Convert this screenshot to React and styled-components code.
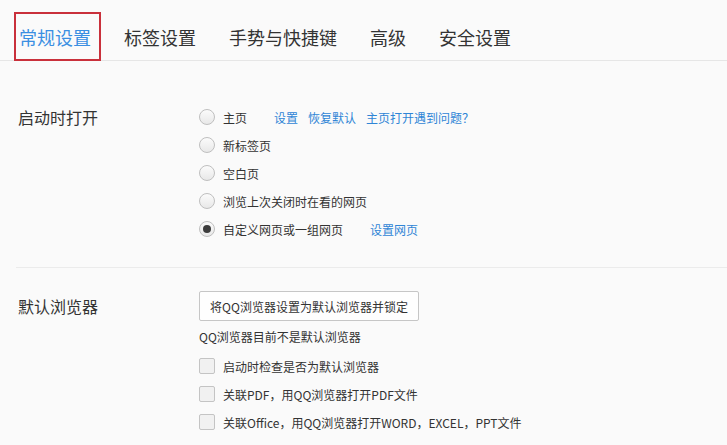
import React from "react";
import styled, { createGlobalStyle } from "styled-components";

const Global = createGlobalStyle`
  html, body { margin: 0; padding: 0; background: #fafafa; }
  body {
    font-family: "Noto Sans CJK SC", "Noto Sans", "Liberation Sans", sans-serif;
    color: #333;
  }
  * { box-sizing: border-box; }
`;

const Page = styled.div`
  width: 727px;
  height: 445px;
  overflow: hidden;
  background: #fafafa;
`;

const TabBar = styled.div`
  position: relative;
  display: flex;
  gap: 33px;
  height: 61px;
  padding: 24px 0 0 19px;
  border-bottom: 1px solid #e6e6e6;
`;

const Tab = styled.div`
  font-size: 18px;
  line-height: 26px;
  color: ${(p) => (p.$active ? "#3a8fe2" : "#333")};
  white-space: nowrap;
`;

const Highlight = styled.div`
  position: absolute;
  left: 14px;
  top: 12px;
  width: 87px;
  height: 49px;
  border: 2px solid #c9303b;
  pointer-events: none;
`;

const Section = styled.div`
  display: grid;
  grid-template-columns: 181px 1fr;
  padding: ${(p) => p.$pad};
  margin-left: ${(p) => (p.$divided ? "16px" : "0")};
  padding-left: ${(p) => (p.$divided ? "2px" : "18px")};
  border-top: ${(p) => (p.$divided ? "1px solid #ebebeb" : "none")};
`;

const Label = styled.div`
  font-size: 16px;
  line-height: ${(p) => p.$lh};
  color: #333;
`;

const Column = styled.div`
  display: flex;
  flex-direction: column;
`;

const Row = styled.div`
  display: flex;
  align-items: center;
  height: 28px;
  font-size: 12px;
  color: #333;
`;

const Radio = styled.span`
  position: relative;
  width: 16px;
  height: 16px;
  border-radius: 50%;
  border: 1px solid #bfbfbf;
  background: linear-gradient(#fbfbfb, #e8e8e8);
  margin-right: 8px;
  flex: none;
  &::after {
    content: "";
    display: ${(p) => (p.$checked ? "block" : "none")};
    position: absolute;
    left: 3px;
    top: 3px;
    width: 8px;
    height: 8px;
    border-radius: 50%;
    background: #3c3c3c;
  }
`;

const Check = styled.span`
  width: 16px;
  height: 16px;
  border: 1px solid #c4c4c4;
  border-radius: 2px;
  background: #f1f1f1;
  margin-right: 8px;
  flex: none;
`;

const Links = styled.div`
  display: flex;
  gap: 10px;
  margin-left: 27px;
`;

const Link = styled.a`
  color: #2f85d6;
  text-decoration: none;
  cursor: pointer;
`;

const Button = styled.button`
  align-self: flex-start;
  height: 30px;
  width: 220px;
  padding: 0;
  border: 1px solid #c6c6c6;
  border-radius: 2px;
  background: #fefefe;
  font-family: inherit;
  font-size: 12px;
  color: #333;
`;

const Status = styled.div`
  margin: 6px 0 5px;
  font-size: 12px;
  line-height: 20px;
  color: #333;
`;

const startupOptions = [
  { text: "主页", links: ["设置", "恢复默认", "主页打开遇到问题？"] },
  { text: "新标签页" },
  { text: "空白页" },
  { text: "浏览上次关闭时在看的网页" },
  { text: "自定义网页或一组网页", checked: true, links: ["设置网页"] },
];

const checks = [
  "启动时检查是否为默认浏览器",
  "关联PDF，用QQ浏览器打开PDF文件",
  "关联Office，用QQ浏览器打开WORD，EXCEL，PPT文件",
];

const tabs = ["常规设置", "标签设置", "手势与快捷键", "高级", "安全设置"];

export default function App() {
  return (
    <Page>
      <Global />
      <TabBar>
        {tabs.map((t, i) => (
          <Tab key={t} $active={i === 0}>
            {t}
          </Tab>
        ))}
        <Highlight />
      </TabBar>

      <Section $pad="42px 0 24px">
        <Label $lh="28px">启动时打开</Label>
        <Column>
          {startupOptions.map((o) => (
            <Row key={o.text}>
              <Radio $checked={o.checked} />
              <span>{o.text}</span>
              {o.links && (
                <Links>
                  {o.links.map((l) => (
                    <Link key={l}>{l}</Link>
                  ))}
                </Links>
              )}
            </Row>
          ))}
        </Column>
      </Section>

      <Section $divided $pad="23px 0 0">
        <Label $lh="30px">默认浏览器</Label>
        <Column>
          <Button>将QQ浏览器设置为默认浏览器并锁定</Button>
          <Status>QQ浏览器目前不是默认浏览器</Status>
          {checks.map((c) => (
            <Row key={c}>
              <Check />
              <span>{c}</span>
            </Row>
          ))}
        </Column>
      </Section>
    </Page>
  );
}
